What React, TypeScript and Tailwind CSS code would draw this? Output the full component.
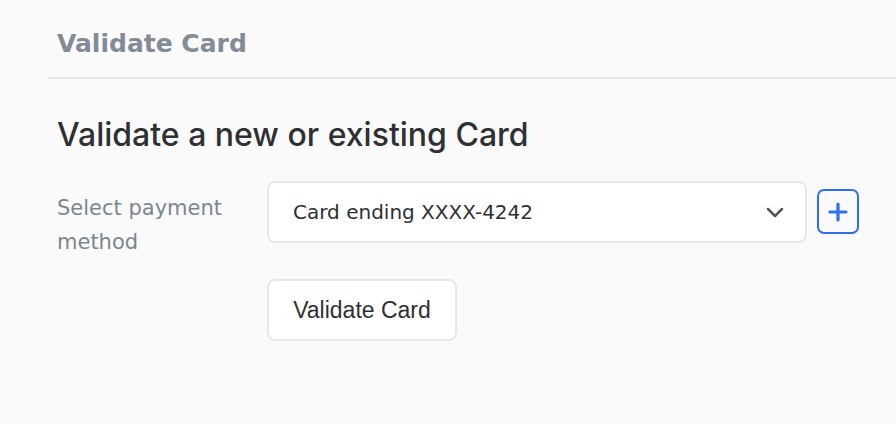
import React from "react";

export default function App() {
  return (
    <div className="w-[896px] h-[424px] bg-[#fafafa] overflow-hidden">
      <div className="pl-[57px] pt-[27px] h-[77px]">
        <h1 className="text-[25px] leading-[34px] font-bold text-[#838c96]" style={{ fontFamily: '"DejaVu Sans", Verdana, sans-serif' }}>
          Validate Card
        </h1>
      </div>
      <div className="ml-[48px] border-t-2 border-[#e6e6e6]" />
      <div className="pl-[57px] pt-[36px]">
        <h2 className="text-[32px] leading-[40px] font-medium text-[#2f3033]" style={{ fontFamily: 'Inter, sans-serif' }}>
          Validate a new or existing Card
        </h2>
        <div className="flex mt-[26px]">
          <div className="w-[210px] pt-[10px] text-[21px] leading-[34px] text-[#7c8791]" style={{ fontFamily: '"DejaVu Sans", Verdana, sans-serif' }}>
            Select payment<br />method
          </div>
          <div className="flex flex-col">
            <div className="flex items-start gap-[10px]">
              <div className="w-[540px] h-[62px] bg-white border-2 border-[#e8e8e8] rounded-[8px] flex items-center justify-between pl-[24px] pr-[18px]">
                <span className="text-[20px] text-[#2f3033]" style={{ fontFamily: '"DejaVu Sans", Verdana, sans-serif' }}>
                  Card ending XXXX-4242
                </span>
                <svg width="24" height="24" viewBox="0 0 24 24" fill="none" stroke="#555" strokeWidth="2.5" strokeLinecap="round" strokeLinejoin="round">
                  <path d="M5 9l7 7 7-7" />
                </svg>
              </div>
              <button className="mt-[8px] w-[42px] h-[45px] rounded-[7px] border-2 border-[#2f6fed] flex items-center justify-center bg-transparent">
                <svg width="22" height="22" viewBox="0 0 22 22" fill="none" stroke="#2f6fed" strokeWidth="3.2" strokeLinecap="round">
                  <path d="M11 3v16M3 11h16" />
                </svg>
              </button>
            </div>
            <button className="mt-[36px] w-[190px] h-[62px] bg-white border-2 border-[#e8e8e8] rounded-[8px] text-[23px] text-[#2f3033]" style={{ fontFamily: '"Liberation Sans", Arial, sans-serif' }}>
              Validate Card
            </button>
          </div>
        </div>
      </div>
    </div>
  );
}
